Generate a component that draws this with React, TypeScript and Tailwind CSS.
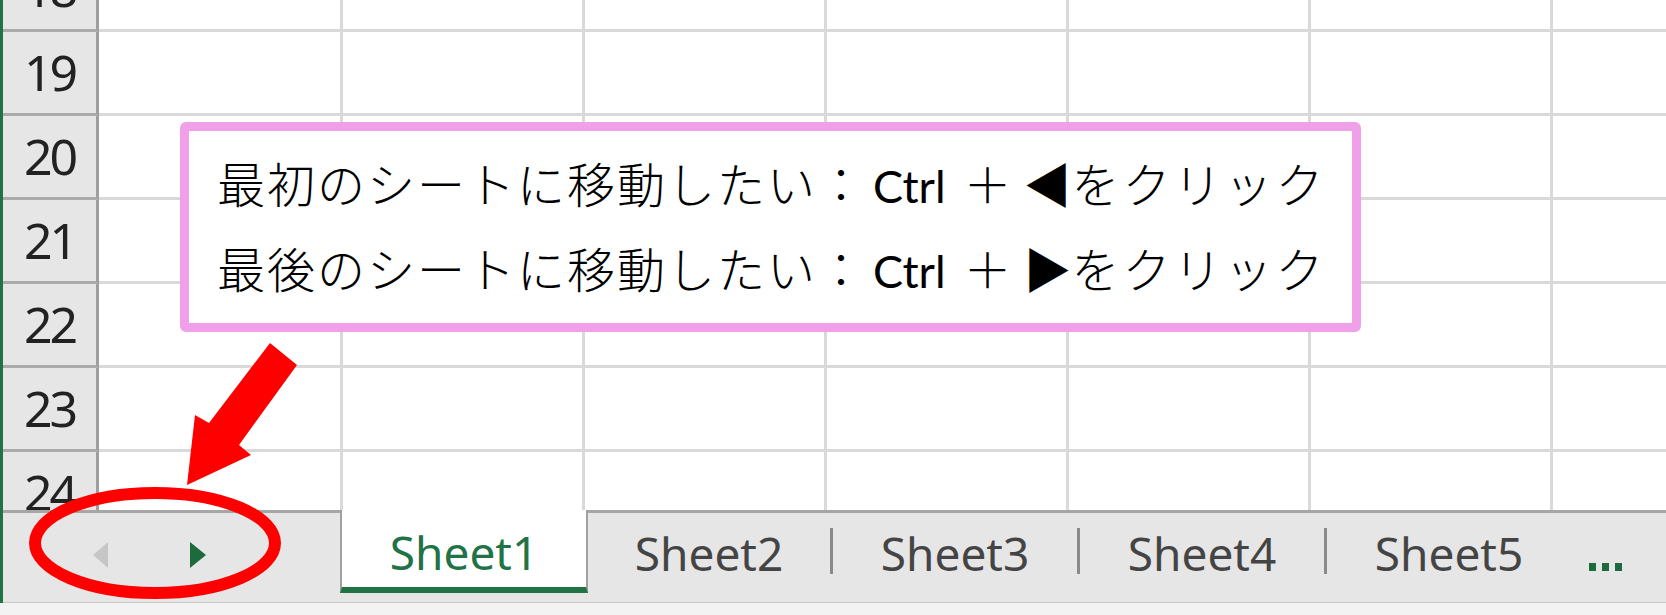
import React from 'react';

const rows = [18, 19, 20, 21, 22, 23, 24];
const cols = [244, 242, 242, 242, 242, 242, 242];

const jp = "font-['Noto_Sans_CJK_JP',sans-serif]";

const CalloutLine: React.FC<{ head: string; arrow: string }> = ({ head, arrow }) => (
  <div className="flex items-baseline h-[85px] leading-[85px] whitespace-nowrap">
    <span className="tracking-[2px]">{head}</span>
    <span className="font-['Lato',sans-serif] font-normal text-[45px] ml-[6px]">Ctrl</span>
    <span className="ml-[18px]">＋</span>
    <span className="ml-[12px]">{arrow}</span>
    <span className="tracking-[3px]">をクリック</span>
  </div>
);

const App: React.FC = () => {
  return (
    <div className="relative w-[1666px] h-[615px] overflow-hidden bg-white">
      <div className="flex flex-col h-[603px] border-l-[3px] border-[#217346]">
        {/* cell grid */}
        <div className="h-[510px] overflow-hidden">
          <div className="-mt-[52px]">
            {rows.map((r) => (
              <div key={r} className="flex h-[84px]">
                <div className="w-[96px] shrink-0 flex items-center justify-center bg-[#e6e6e6] border-b-[3px] border-b-[#ababab] border-r-[3px] border-r-[#9e9e9e] font-['Noto_Sans',sans-serif] text-[50px] tracking-[-3px] text-[#222]">
                  {r}
                </div>
                {cols.map((w, i) => (
                  <div
                    key={i}
                    style={{ width: w }}
                    className="shrink-0 border-r-[3px] border-b-[3px] border-[#d9d9d9]"
                  />
                ))}
              </div>
            ))}
          </div>
        </div>

        {/* sheet tab bar */}
        <div className="flex h-[93px] bg-[#e6e6e6] border-b border-[#c8c8c8] font-['Noto_Sans',sans-serif] text-[46px]">
          <div className="w-[337px] h-full shrink-0 border-t-[3px] border-[#a6a6a6] flex items-start pt-[29px] pl-[90px]">
            <svg width="15" height="26" viewBox="0 0 15 26">
              <polygon points="15,0 15,26 0,13" fill="#c6c6c6" />
            </svg>
            <svg width="16" height="26" viewBox="0 0 16 26" className="ml-[82px]">
              <polygon points="0,0 0,26 16,13" fill="#1d6b3c" />
            </svg>
          </div>
          <div className="w-[248px] h-[83px] shrink-0 bg-white border-x-2 border-[#a0a0a0] border-b-[6px] border-b-[#217346] flex items-center justify-center pt-[8px] text-[#217346]">
            Sheet1
          </div>
          <div className="flex-1 h-full border-t-[3px] border-[#a6a6a6] flex items-start text-[#444]">
            {['Sheet2', 'Sheet3', 'Sheet4', 'Sheet5'].map((name, i) => (
              <React.Fragment key={name}>
                <div className={`${i === 0 ? 'w-[242px]' : 'w-[244px]'} h-[80px] shrink-0 flex items-center justify-center`}>
                  {name}
                </div>
                {i < 3 && <div className="w-[3px] h-[46px] mt-[15px] shrink-0 bg-[#8a8a8a]" />}
              </React.Fragment>
            ))}
            <div className="flex gap-[6px] ml-[18px] mt-[50px]">
              <div className="w-[7px] h-[8px] bg-[#1d6b3c]" />
              <div className="w-[7px] h-[8px] bg-[#1d6b3c]" />
              <div className="w-[7px] h-[8px] bg-[#1d6b3c]" />
            </div>
          </div>
        </div>
      </div>
      <div className="h-[12px] bg-[#f3f3f3]" />

      {/* callout */}
      <div className={`absolute left-[180px] top-[122px] w-[1181px] h-[210px] bg-white border-[9px] border-[#efa0e8] rounded-[6px] pl-[28px] pt-[9px] text-[48px] text-black font-light ${jp}`}>
        <CalloutLine head="最初のシートに移動したい：" arrow="◀" />
        <CalloutLine head="最後のシートに移動したい：" arrow="▶" />
      </div>

      {/* red annotation */}
      <svg className="absolute inset-0 pointer-events-none" width="1666" height="615" viewBox="0 0 1666 615">
        <ellipse cx="155" cy="543" rx="120" ry="50" fill="none" stroke="#ff0000" strokeWidth="12" />
        <polygon points="270,343 297,365 239,445 251,455 187,485 195,415 209,423" fill="#ff0000" />
      </svg>
    </div>
  );
};

export default App;
